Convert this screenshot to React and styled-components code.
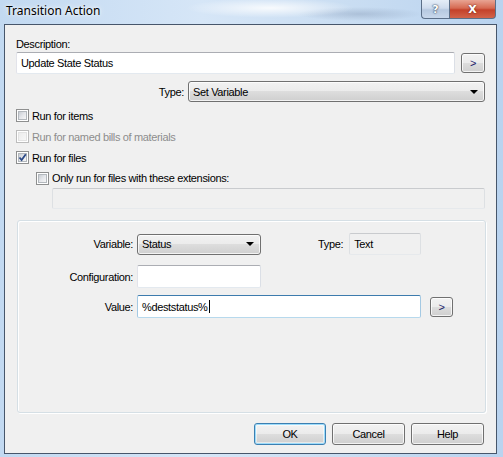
import React from 'react';
import styled, { createGlobalStyle, css } from 'styled-components';

const Global = createGlobalStyle`
  html, body { margin: 0; padding: 0; }
  body {
    width: 503px;
    height: 457px;
    overflow: hidden;
    font-family: "Liberation Sans", Arial, sans-serif;
    font-size: 11px;
    letter-spacing: -0.35px;
    color: #000;
  }
`;

const Window = styled.div`
  width: 503px;
  height: 457px;
  display: flex;
  flex-direction: column;
  background:
    radial-gradient(ellipse 120px 14px at 270px 8px, rgba(255,255,255,0.85), rgba(255,255,255,0) 70%),
    radial-gradient(ellipse 90px 10px at 360px 14px, rgba(120,140,170,0.35), rgba(120,140,170,0) 70%),
    linear-gradient(90deg, #c2d9f1 0%, #d6e6f7 40%, #c9ddf2 70%, #b9d3ef 100%);
  box-sizing: border-box;
`;

const TitleBar = styled.div`
  height: 24px;
  display: flex;
  align-items: flex-start;
  justify-content: space-between;
  padding-left: 6px;
  padding-right: 6px;
`;

const Title = styled.div`
  font-family: "Noto Sans", "Open Sans", sans-serif;
  font-size: 12px;
  letter-spacing: 0;
  line-height: 22px;
  color: #000;
  text-shadow: 0 0 6px rgba(255,255,255,0.9), 0 0 3px rgba(255,255,255,0.9);
`;

const CaptionButtons = styled.div`
  display: flex;
  margin-right: 1px;
`;

const CaptionButton = styled.div`
  height: 19px;
  border: 1px solid #5b6f88;
  border-top: none;
  box-sizing: border-box;
  display: flex;
  align-items: center;
  justify-content: center;
  font-family: "DejaVu Sans", sans-serif;
  font-weight: bold;
  font-size: 11px;
  letter-spacing: 0;
  ${p => p.$close ? css`
    width: 47px;
    border-radius: 0 0 4px 0;
    background: linear-gradient(180deg, #e8a493 0%, #d66a52 45%, #c4412a 55%, #d2634a 100%);
    color: #fff;
    text-shadow: 0 0 2px #5a1a10;
  ` : css`
    width: 28px;
    border-right: none;
    border-radius: 0 0 0 4px;
    background: linear-gradient(180deg, #e5eef8 0%, #cfdced 45%, #b6c9e0 55%, #c8d8ec 100%);
    color: #fff;
    text-shadow: 0 0 2px #2b3c55, 0 0 1px #2b3c55;
  `}
`;

const Client = styled.div`
  margin: 0 6px 3px 4px;
  height: 430px;
  border: 1px solid #47566b;
  background: #f0f0f0;
  box-sizing: border-box;
  padding: 12px 11px 0 11px;
  display: flex;
  flex-direction: column;
`;

const Label = styled.div`
  line-height: 14px;
  white-space: nowrap;
  color: ${p => (p.$disabled ? '#8d8d8d' : '#000')};
`;

const Row = styled.div`
  display: flex;
  align-items: center;
  gap: ${p => p.$gap || 0}px;
  margin-top: ${p => p.$mt || 0}px;
  justify-content: ${p => p.$justify || 'flex-start'};
`;

const TextBox = styled.div`
  box-sizing: border-box;
  width: ${p => p.$w}px;
  height: ${p => p.$h || 22}px;
  background: ${p => (p.$disabled ? '#f0f0f0' : '#fff')};
  border: 1px solid;
  border-radius: 2px;
  border-color: ${p => p.$focus
    ? '#3d7bad #a4c9e3 #b7d9ed #a4c9e3'
    : p.$disabled
      ? '#c9cbce #dde0e3 #e6e9ec #dde0e3'
      : '#abadb3 #dbdfe6 #e3e9ef #e2e3ea'};
  padding: 0 4px;
  display: flex;
  align-items: ${p => (p.$top ? 'flex-start' : 'center')};
  padding-top: ${p => (p.$top ? 3 : 0)}px;
  line-height: 14px;
  white-space: nowrap;
  flex: none;
`;

const Caret = styled.span`
  display: inline-block;
  width: 1px;
  height: 13px;
  background: #000;
  margin-left: 1px;
`;

const buttonFace = css`
  box-sizing: border-box;
  border: 1px solid #707070;
  border-radius: 3px;
  background: linear-gradient(180deg, #f2f2f2 0%, #ebebeb 49%, #dddddd 50%, #cfcfcf 100%);
  box-shadow: inset 0 0 0 1px rgba(255,255,255,0.75);
`;

const SmallButton = styled.div`
  ${buttonFace}
  width: ${p => p.$w || 24}px;
  height: ${p => p.$h || 20}px;
  display: flex;
  align-items: center;
  justify-content: center;
  font-size: 11px;
  flex: none;
`;

const Combo = styled.div`
  ${buttonFace}
  width: ${p => p.$w}px;
  height: 21px;
  display: flex;
  align-items: center;
  justify-content: space-between;
  padding: 0 6px 0 4px;
  flex: none;
`;

const Arrow = styled.span`
  width: 0;
  height: 0;
  border-left: 4px solid transparent;
  border-right: 4px solid transparent;
  border-top: 4px solid #000;
`;

const CheckRow = styled.div`
  display: flex;
  align-items: center;
  height: ${p => p.$h || 21}px;
  gap: 3px;
  margin-left: ${p => p.$indent || 0}px;
`;

const CheckBoxBox = styled.span`
  box-sizing: border-box;
  width: 13px;
  height: 13px;
  border: 1px solid ${p => (p.$disabled ? '#bcbcbc' : '#8e8f8f')};
  background: #fff;
  padding: 1px;
  display: flex;
  flex: none;
`;

const CheckInner = styled.span`
  flex: 1;
  position: relative;
  background: ${p => (p.$disabled
    ? 'linear-gradient(135deg, #ececec, #f7f7f7)'
    : 'linear-gradient(135deg, #c9cdd3 0%, #e4e6ea 50%, #f6f6f6 100%)')};
  border: 1px solid ${p => (p.$disabled ? '#e2e2e2' : '#b3b8bd')};
`;

const CheckMark = styled.svg`
  position: absolute;
  left: -2px;
  top: -2px;
`;

const ExtBoxWrap = styled.div`
  margin-left: 36px;
`;

const Group = styled.div`
  box-sizing: border-box;
  margin-top: 11px;
  margin-left: 1px;
  width: 469px;
  height: 193px;
  border: 1px solid #d5dfe5;
  border-radius: 3px;
  box-shadow: inset 1px 1px 0 #fff, 1px 1px 0 #fff;
  padding-top: 12px;
`;

const FormGrid = styled.div`
  display: grid;
  grid-template-columns: 115px auto;
  column-gap: 4px;
  align-items: center;
`;

const FormLabel = styled.div`
  text-align: right;
  line-height: 14px;
  white-space: nowrap;
  margin-top: ${p => p.$mt || 0}px;
`;

const FormCell = styled.div`
  display: flex;
  align-items: center;
  gap: ${p => p.$gap || 0}px;
  margin-top: ${p => p.$mt || 0}px;
`;

const TypeLabel = styled.div`
  margin-left: 57px;
  margin-right: 6px;
  line-height: 14px;
`;

const Footer = styled.div`
  display: flex;
  justify-content: flex-end;
  gap: 6px;
  margin-top: 10px;
  margin-right: 1px;
`;

const DialogButton = styled.div`
  ${buttonFace}
  width: ${p => p.$w}px;
  height: 22px;
  display: flex;
  align-items: center;
  justify-content: center;
  font-size: 11px;
  ${p => p.$default && css`
    border-color: #3c7fb1;
    box-shadow: inset 0 0 0 1px #9ddcfb, inset 0 0 0 2px rgba(255,255,255,0.5);
  `}
`;

const ArrowButtonText = styled.span`
  font-size: 11px;
  color: #1c1c6b;
`;

function CheckBox({ checked, disabled, label, indent, h }) {
  return (
    <CheckRow $indent={indent} $h={h}>
      <CheckBoxBox $disabled={disabled}>
        <CheckInner $disabled={disabled}>
          {checked && (
            <CheckMark width="11" height="11" viewBox="0 0 11 11">
              <path d="M2.5 5.5 L4.6 8 L8.8 2.2" fill="none" stroke="#2c4a87" strokeWidth="1.8" />
            </CheckMark>
          )}
        </CheckInner>
      </CheckBoxBox>
      <Label $disabled={disabled}>{label}</Label>
    </CheckRow>
  );
}

export default function App() {
  return (
    <>
      <Global />
      <Window>
        <TitleBar>
          <Title>Transition Action</Title>
          <CaptionButtons>
            <CaptionButton>?</CaptionButton>
            <CaptionButton $close>X</CaptionButton>
          </CaptionButtons>
        </TitleBar>
        <Client>
          <Label>Description:</Label>
          <Row $mt={1} $gap={6}>
            <TextBox $w={439}>Update State Status</TextBox>
            <SmallButton><ArrowButtonText>&gt;</ArrowButtonText></SmallButton>
          </Row>
          <Row $mt={7} $gap={4} $justify="flex-end">
            <Label>Type:</Label>
            <Combo $w={297}>
              <span>Set Variable</span>
              <Arrow />
            </Combo>
          </Row>
          <Row $mt={3} />
          <CheckBox label="Run for items" />
          <CheckBox label="Run for named bills of materials" disabled />
          <CheckBox label="Run for files" checked />
          <CheckBox label="Only run for files with these extensions:" indent={20} h={20} />
          <ExtBoxWrap>
            <TextBox $w={433} $h={21} $disabled />
          </ExtBoxWrap>
          <Group>
            <FormGrid>
              <FormLabel>Variable:</FormLabel>
              <FormCell>
                <Combo $w={124}>
                  <span>Status</span>
                  <Arrow />
                </Combo>
                <TypeLabel>Type:</TypeLabel>
                <TextBox $w={72} $h={22} $disabled $top>Text</TextBox>
              </FormCell>
              <FormLabel $mt={10}>Configuration:</FormLabel>
              <FormCell $mt={10}>
                <TextBox $w={124} $h={23} />
              </FormCell>
              <FormLabel $mt={7}>Value:</FormLabel>
              <FormCell $mt={7} $gap={9}>
                <TextBox $w={284} $h={23} $focus>%deststatus%<Caret /></TextBox>
                <SmallButton $w={23}><ArrowButtonText>&gt;</ArrowButtonText></SmallButton>
              </FormCell>
            </FormGrid>
          </Group>
          <Footer>
            <DialogButton $w={72} $default>OK</DialogButton>
            <DialogButton $w={73}>Cancel</DialogButton>
            <DialogButton $w={73}>Help</DialogButton>
          </Footer>
        </Client>
      </Window>
    </>
  );
}
